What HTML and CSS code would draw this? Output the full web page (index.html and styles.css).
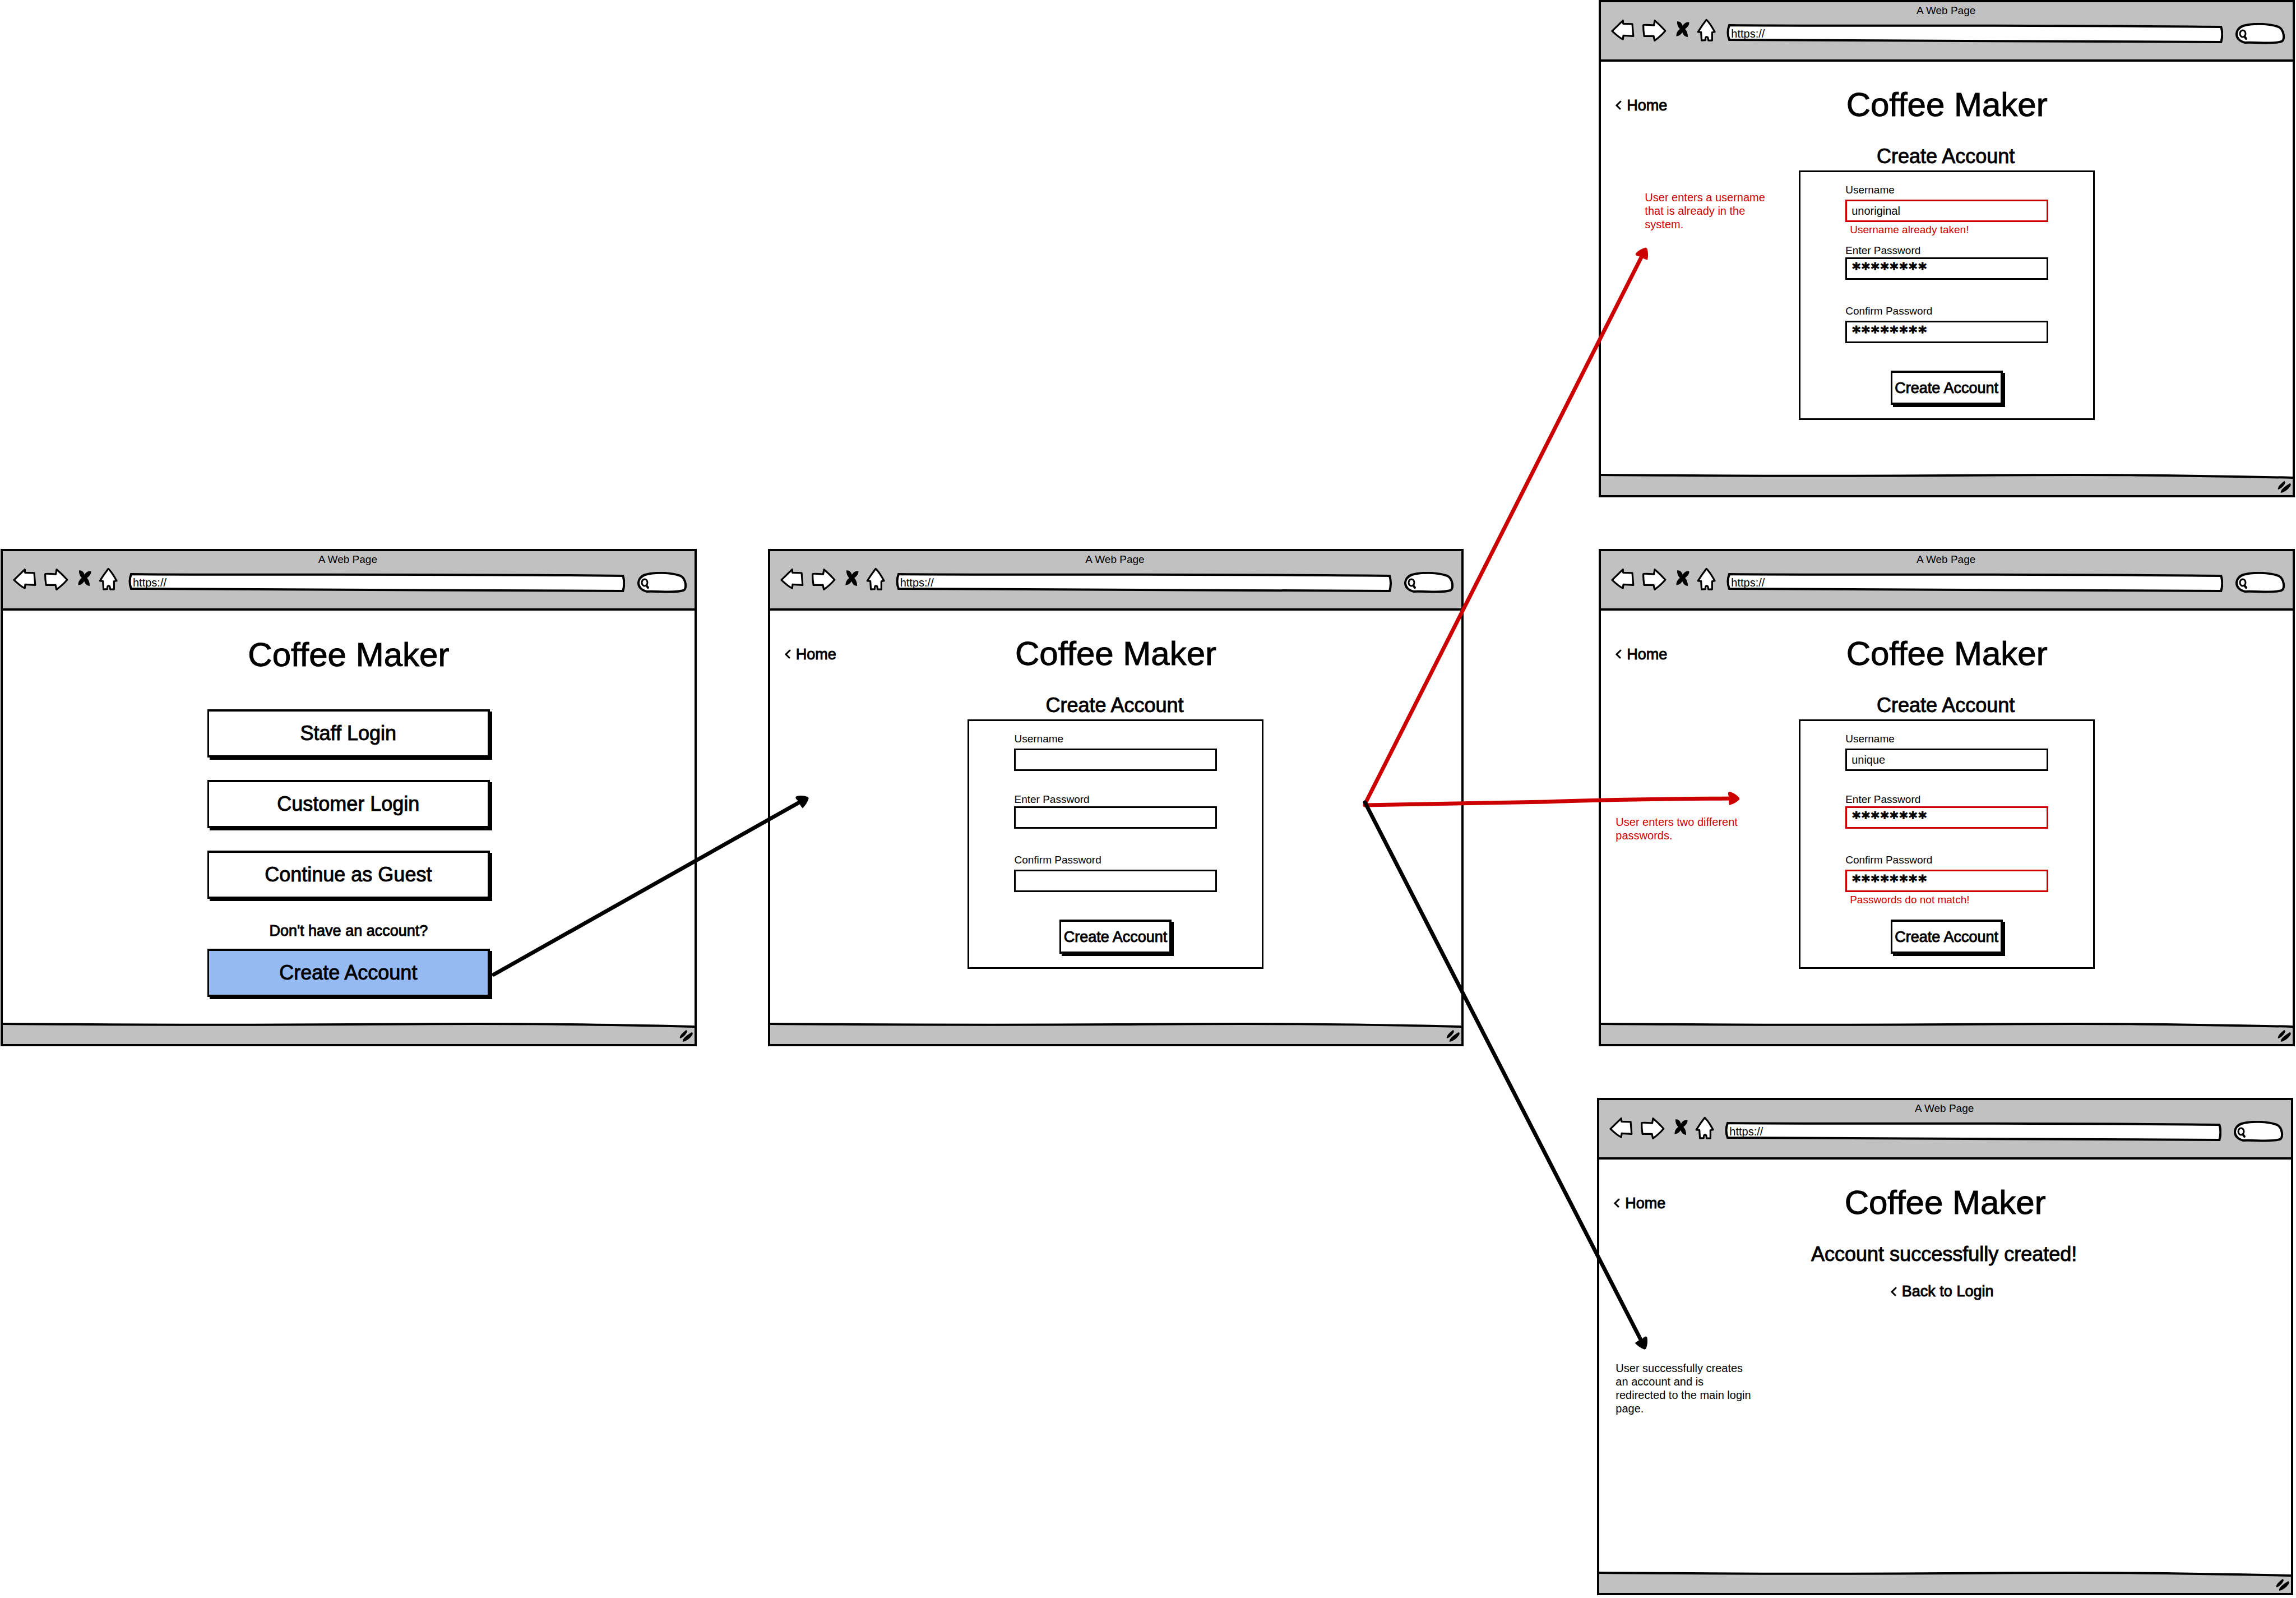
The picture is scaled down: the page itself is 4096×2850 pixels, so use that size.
FILE: index.html
```html
<!DOCTYPE html>
<html lang="en">
<head>
<meta charset="utf-8">
<title>Coffee Maker – create account flow</title>
<link rel="stylesheet" href="styles.css">
</head>
<body>
<svg class="sprite" aria-hidden="true">
  <symbol id="back" viewBox="32 28 170 218"><path class="outline" d="M40 118L118 42L120 66L186 68L193 155L121 151L118 178Q90 165 40 118Z"/></symbol>
  <symbol id="forward" viewBox="254 28 176 218"><path class="outline" d="M264 76Q268 71 340 77L346 43Q385 75 422 117Q390 155 345 187L338 155L270 155Q263 110 264 76Z"/></symbol>
  <symbol id="stop" viewBox="502 28 98 218"><path d="M510 48Q540 45 550 80Q568 48 598 54Q600 80 568 103Q588 125 588 161Q560 162 548 128Q530 155 504 156Q502 125 530 103Q508 80 510 48Z"/></symbol>
  <symbol id="home" viewBox="650 28 138 218"><path class="outline" d="M720 37Q745 60 780 124L761 128L761 186L734 186L731 168Q729 161 720 161Q712 162 712 184L685 186L681 126L659 124Q690 75 720 37Z"/></symbol>
  <symbol id="chevron" viewBox="0 0 12 17"><path d="M10 2L3 9L9 15" fill="none" stroke="#000" stroke-width="3" stroke-linecap="round"/></symbol>
  <symbol id="grip" viewBox="0 0 24 21"><path d="M12 0Q15 1 13 5Q8 13 1 15Q-1 10 12 0ZM22 4Q25 5 23 9Q16 19 6 21Q4 15 22 4Z"/></symbol>
</svg>

<main class="board">

  <section class="window start">
    <header class="chrome">
      <p class="chrome-title">A Web Page</p>
      <div class="toolbar">
        <button class="nav" aria-label="Back"><svg width="42" height="54"><use href="#back"/></svg></button>
        <button class="nav" aria-label="Forward"><svg width="44" height="54"><use href="#forward"/></svg></button>
        <button class="nav stop" aria-label="Stop"><svg width="24" height="54"><use href="#stop"/></svg></button>
        <button class="nav" aria-label="Home page"><svg width="34" height="54"><use href="#home"/></svg></button>
        <input class="address" type="text" value="https://" aria-label="Address">
        <input class="search" type="search" aria-label="Search">
      </div>
    </header>
    <div class="page">
      <div class="page-head"><h1>Coffee Maker</h1></div>
      <div class="choices">
        <button class="btn wide">Staff Login</button>
        <button class="btn wide">Customer Login</button>
        <button class="btn wide">Continue as Guest</button>
        <div class="signup">
          <p>Don't have an account?</p>
          <button class="btn wide active">Create Account</button>
        </div>
      </div>
    </div>
    <footer class="status"><svg width="24" height="21"><use href="#grip"/></svg></footer>
  </section>

  <section class="window form-empty">
    <header class="chrome">
      <p class="chrome-title">A Web Page</p>
      <div class="toolbar">
        <button class="nav" aria-label="Back"><svg width="42" height="54"><use href="#back"/></svg></button>
        <button class="nav" aria-label="Forward"><svg width="44" height="54"><use href="#forward"/></svg></button>
        <button class="nav stop" aria-label="Stop"><svg width="24" height="54"><use href="#stop"/></svg></button>
        <button class="nav" aria-label="Home page"><svg width="34" height="54"><use href="#home"/></svg></button>
        <input class="address" type="text" value="https://" aria-label="Address">
        <input class="search" type="search" aria-label="Search">
      </div>
    </header>
    <div class="page">
      <div class="page-head"><a class="link" href="#"><svg width="12" height="17"><use href="#chevron"/></svg>Home</a><h1>Coffee Maker</h1></div>
      <h2>Create Account</h2>
      <form class="panel">
        <div class="field"><label for="user-a">Username</label><input id="user-a" type="text"></div>
        <div class="field tight"><label for="pass-a">Enter Password</label><input id="pass-a" type="text"></div>
        <div class="field"><label for="conf-a">Confirm Password</label><input id="conf-a" type="text"></div>
        <button class="btn" type="button">Create Account</button>
      </form>
    </div>
    <footer class="status"><svg width="24" height="21"><use href="#grip"/></svg></footer>
  </section>

  <section class="window form-taken">
    <header class="chrome">
      <p class="chrome-title">A Web Page</p>
      <div class="toolbar">
        <button class="nav" aria-label="Back"><svg width="42" height="54"><use href="#back"/></svg></button>
        <button class="nav" aria-label="Forward"><svg width="44" height="54"><use href="#forward"/></svg></button>
        <button class="nav stop" aria-label="Stop"><svg width="24" height="54"><use href="#stop"/></svg></button>
        <button class="nav" aria-label="Home page"><svg width="34" height="54"><use href="#home"/></svg></button>
        <input class="address" type="text" value="https://" aria-label="Address">
        <input class="search" type="search" aria-label="Search">
      </div>
    </header>
    <div class="page">
      <div class="page-head"><a class="link" href="#"><svg width="12" height="17"><use href="#chevron"/></svg>Home</a><h1>Coffee Maker</h1></div>
      <h2>Create Account</h2>
      <form class="panel">
        <div class="field"><label for="user-b">Username</label><input id="user-b" class="bad" type="text" value="unoriginal"><p class="error">Username already taken!</p></div>
        <div class="field tight"><label for="pass-b">Enter Password</label><input id="pass-b" class="masked" type="text" value="********"></div>
        <div class="field"><label for="conf-b">Confirm Password</label><input id="conf-b" class="masked" type="text" value="********"></div>
        <button class="btn" type="button">Create Account</button>
      </form>
    </div>
    <footer class="status"><svg width="24" height="21"><use href="#grip"/></svg></footer>
    <p class="note red note-taken">User enters a username that is already in the system.</p>
  </section>

  <section class="window form-mismatch">
    <header class="chrome">
      <p class="chrome-title">A Web Page</p>
      <div class="toolbar">
        <button class="nav" aria-label="Back"><svg width="42" height="54"><use href="#back"/></svg></button>
        <button class="nav" aria-label="Forward"><svg width="44" height="54"><use href="#forward"/></svg></button>
        <button class="nav stop" aria-label="Stop"><svg width="24" height="54"><use href="#stop"/></svg></button>
        <button class="nav" aria-label="Home page"><svg width="34" height="54"><use href="#home"/></svg></button>
        <input class="address" type="text" value="https://" aria-label="Address">
        <input class="search" type="search" aria-label="Search">
      </div>
    </header>
    <div class="page">
      <div class="page-head"><a class="link" href="#"><svg width="12" height="17"><use href="#chevron"/></svg>Home</a><h1>Coffee Maker</h1></div>
      <h2>Create Account</h2>
      <form class="panel">
        <div class="field"><label for="user-c">Username</label><input id="user-c" type="text" value="unique"></div>
        <div class="field tight"><label for="pass-c">Enter Password</label><input id="pass-c" class="masked bad" type="text" value="********"></div>
        <div class="field"><label for="conf-c">Confirm Password</label><input id="conf-c" class="masked bad" type="text" value="********"><p class="error">Passwords do not match!</p></div>
        <button class="btn" type="button">Create Account</button>
      </form>
    </div>
    <footer class="status"><svg width="24" height="21"><use href="#grip"/></svg></footer>
    <p class="note red note-mismatch">User enters two different passwords.</p>
  </section>

  <section class="window success">
    <header class="chrome">
      <p class="chrome-title">A Web Page</p>
      <div class="toolbar">
        <button class="nav" aria-label="Back"><svg width="42" height="54"><use href="#back"/></svg></button>
        <button class="nav" aria-label="Forward"><svg width="44" height="54"><use href="#forward"/></svg></button>
        <button class="nav stop" aria-label="Stop"><svg width="24" height="54"><use href="#stop"/></svg></button>
        <button class="nav" aria-label="Home page"><svg width="34" height="54"><use href="#home"/></svg></button>
        <input class="address" type="text" value="https://" aria-label="Address">
        <input class="search" type="search" aria-label="Search">
      </div>
    </header>
    <div class="page">
      <div class="page-head"><a class="link" href="#"><svg width="12" height="17"><use href="#chevron"/></svg>Home</a><h1>Coffee Maker</h1></div>
      <h2>Account successfully created!</h2>
      <a class="link return" href="#"><svg width="12" height="17"><use href="#chevron"/></svg>Back to Login</a>
    </div>
    <footer class="status"><svg width="24" height="21"><use href="#grip"/></svg></footer>
    <p class="note note-success">User successfully creates an account and is redirected to the main login page.</p>
  </section>

  <svg class="arrows" viewBox="0 0 4096 2850" preserveAspectRatio="none" aria-hidden="true">
    <defs>
      <marker id="head" markerUnits="userSpaceOnUse" markerWidth="30" markerHeight="30" refX="-10" refY="0" viewBox="-25 -15 30 30" orient="auto"><path d="M0 -1Q-7 -9 -17 -12Q-22 -12 -19 -4L-19 5Q-19 9 -18 12Q-7 9 0 2Z"/></marker>
      <marker id="head-red" markerUnits="userSpaceOnUse" markerWidth="30" markerHeight="30" refX="-10" refY="0" viewBox="-25 -15 30 30" orient="auto"><path d="M0 -1Q-7 -9 -17 -12Q-22 -12 -19 -4L-19 5Q-19 9 -18 12Q-7 9 0 2Z"/></marker>
    </defs>
    <path d="M881 1738L1433 1427" marker-end="url(#head)"/>
    <path class="red-line" d="M2436 1432L2932 451" marker-end="url(#head-red)"/>
    <path class="red-line" d="M2435 1436L2760 1430Q2900 1425 3093 1424" marker-end="url(#head-red)"/>
    <path d="M2435 1431L2931 2397" marker-end="url(#head)"/>
  </svg>
</main>
</body>
</html>
```
FILE: styles.css
```css
* {
  box-sizing: border-box;
}

body {
  margin: 0;
  background: #fff;
  color: #000;
  font: 27px/32px "Liberation Sans", Arial, sans-serif;
}

h1, h2, p {
  margin: 0;
}

button, input {
  font: inherit;
  color: inherit;
  border-radius: 0;
  appearance: none;
  outline: 0;
}

.sprite {
  position: absolute;
  width: 0;
  height: 0;
}

.outline {
  fill: #fff;
  stroke: #000;
  stroke-width: 13px;
  stroke-linejoin: round;
}

.board {
  position: relative;
  display: grid;
  grid-template-columns: 1fr 127px 1fr 241px 1fr;
  grid-template-rows: repeat(3, 1fr);
  row-gap: 92px;
  min-height: 100vh;
  padding: 0 2px 5px 1px;
}

.start { grid-area: 2 / 1; }
.form-empty { grid-area: 2 / 3; }
.form-taken { grid-area: 1 / 5; }
.form-mismatch { grid-area: 2 / 5; }
.success { grid-area: 3 / 5; margin: 0 3px 0 -3px; }

/* Browser frame */

.window {
  position: relative;
  display: flex;
  flex-direction: column;
  border: 4px solid #000;
}

.chrome {
  padding: 3px 13px 19px 18px;
  background: #c1c1c1;
  border-bottom: 4px solid #000;
}

.chrome-title {
  padding-right: 8px;
  font-size: 19px;
  line-height: 24px;
  text-align: center;
}

.toolbar {
  display: flex;
  align-items: center;
  gap: 13px;
  padding-top: 2px;
}

.nav {
  padding: 0;
  border: 0;
  background: none;
}

.nav svg {
  display: block;
}

.nav.stop {
  margin-left: 4px;
}

.address {
  flex: 1;
  min-width: 0;
  height: 34px;
  margin-left: 6px;
  padding: 0 8px;
  border: 0;
  font-size: 20px;
  background: url("data:image/svg+xml,%3Csvg xmlns='http://www.w3.org/2000/svg' viewBox='0 0 886 34' preserveAspectRatio='none'%3E%3Cpath d='M5 2C200 4 550 1 882 5Q886 18 882 32C500 32 250 28 5 28Q0 15 5 2Z' fill='%23fff' stroke='%23000' stroke-width='4'/%3E%3C/svg%3E") 0 0 / 100% 100% no-repeat;
}

.search {
  width: 89px;
  height: 38px;
  margin-left: 9px;
  padding: 0 12px 0 26px;
  border: 0;
  background: url("data:image/svg+xml,%3Csvg xmlns='http://www.w3.org/2000/svg' viewBox='0 0 89 38'%3E%3Cpath d='M17 35C-2 31 -3 11 14 5C32 0 60 1 77 7C87 12 89 31 82 33C66 38 40 34 17 35Z' fill='%23fff' stroke='%23000' stroke-width='4'/%3E%3Cellipse cx='13' cy='19' rx='5' ry='6' fill='none' stroke='%23000' stroke-width='3'/%3E%3Cpath d='M16 24L19 28' stroke='%23000' stroke-width='4' stroke-linecap='round'/%3E%3C/svg%3E") 0 0 / 100% 100% no-repeat;
}

.status {
  display: flex;
  justify-content: flex-end;
  align-items: flex-end;
  height: 38px;
  padding: 0 3px 4px;
  background: url("data:image/svg+xml,%3Csvg xmlns='http://www.w3.org/2000/svg' viewBox='0 0 1234 38' preserveAspectRatio='none'%3E%3Cpath d='M-4 2C200 3 300 5 620 3C900 1 1000 2 1238 7V42H-4Z' fill='%23c1c1c1' stroke='%23000' stroke-width='4'/%3E%3C/svg%3E") 0 0 / 100% 100% no-repeat;
}

/* Page content */

.page {
  flex: 1;
  display: flex;
  flex-direction: column;
  align-items: center;
  padding-top: 41px;
}

.start .page {
  padding-top: 43px;
}

.page-head {
  align-self: stretch;
  display: grid;
  grid-template-columns: 1fr auto 1fr;
  align-items: center;
}

h1 {
  grid-column: 2;
  font-size: 60px;
  line-height: 72px;
  font-weight: 400;
  -webkit-text-stroke: 1px;
}

h2 {
  margin-top: 34px;
  padding-right: 4px;
  font-size: 36px;
  line-height: 44px;
  font-weight: 400;
  -webkit-text-stroke: 1px;
}

.link {
  display: flex;
  align-items: center;
  gap: 9px;
  padding-top: 1px;
  color: #000;
  text-decoration: none;
  -webkit-text-stroke: 1px;
}

.page-head .link {
  padding-left: 25px;
}

.return {
  margin-top: 27px;
  padding-right: 12px;
}

.btn {
  width: 200px;
  height: 61px;
  padding: 0;
  border: 4px solid #000;
  border-left-width: 3px;
  background: #fff;
  box-shadow: 4px 4px 0 #000;
  white-space: nowrap;
  -webkit-text-stroke: 1px;
}

.btn.wide {
  width: 504px;
  height: 86px;
  font-size: 36px;
}

.btn.active {
  background: #94baf1;
}

.choices {
  display: flex;
  flex-direction: column;
  gap: 40px;
  margin-top: 61px;
}

.signup {
  display: flex;
  flex-direction: column;
  align-items: center;
  gap: 16px;
  padding-top: 1px;
  -webkit-text-stroke: 1px;
}

.panel {
  display: grid;
  grid-template-rows: repeat(3, 108px) auto;
  justify-items: center;
  width: 528px;
  margin-top: 3px;
  padding: 20px 80px 24px;
  border: 3px solid #000;
}

.panel .btn {
  margin-top: 10px;
}

.field {
  display: flex;
  flex-direction: column;
  gap: 5px;
  width: 100%;
  font-size: 19px;
  line-height: 24px;
}

.field.tight {
  gap: 0;
}

.field input {
  width: 100%;
  height: 40px;
  padding: 0 8px;
  border: 3px solid #000;
  background: #fff;
  font-size: 20px;
}

.field input.bad {
  border-color: #c00;
}

.field input.masked {
  font: bold 28px "DejaVu Sans Mono", monospace;
  -webkit-text-stroke: 1px;
}

.error {
  margin-top: -3px;
  padding-left: 8px;
  color: #c00;
}

/* Annotations drawn over the frames */

.note {
  position: absolute;
  width: 244px;
  font-size: 20px;
  line-height: 24px;
}

.red {
  color: #c00;
}

.note-taken { left: 78px; top: 336px; }
.note-mismatch { left: 26px; top: 471px; }
.note-success { left: 29px; top: 466px; }

.arrows {
  position: absolute;
  inset: 0;
  width: 100%;
  height: 100%;
  fill: none;
  stroke: #000;
  stroke-width: 7px;
  stroke-linecap: round;
  pointer-events: none;
}

.arrows marker path {
  fill: #000;
  stroke: none;
}

.arrows #head-red path {
  fill: #c00;
}

.arrows .red-line {
  stroke: #c00;
}
```
